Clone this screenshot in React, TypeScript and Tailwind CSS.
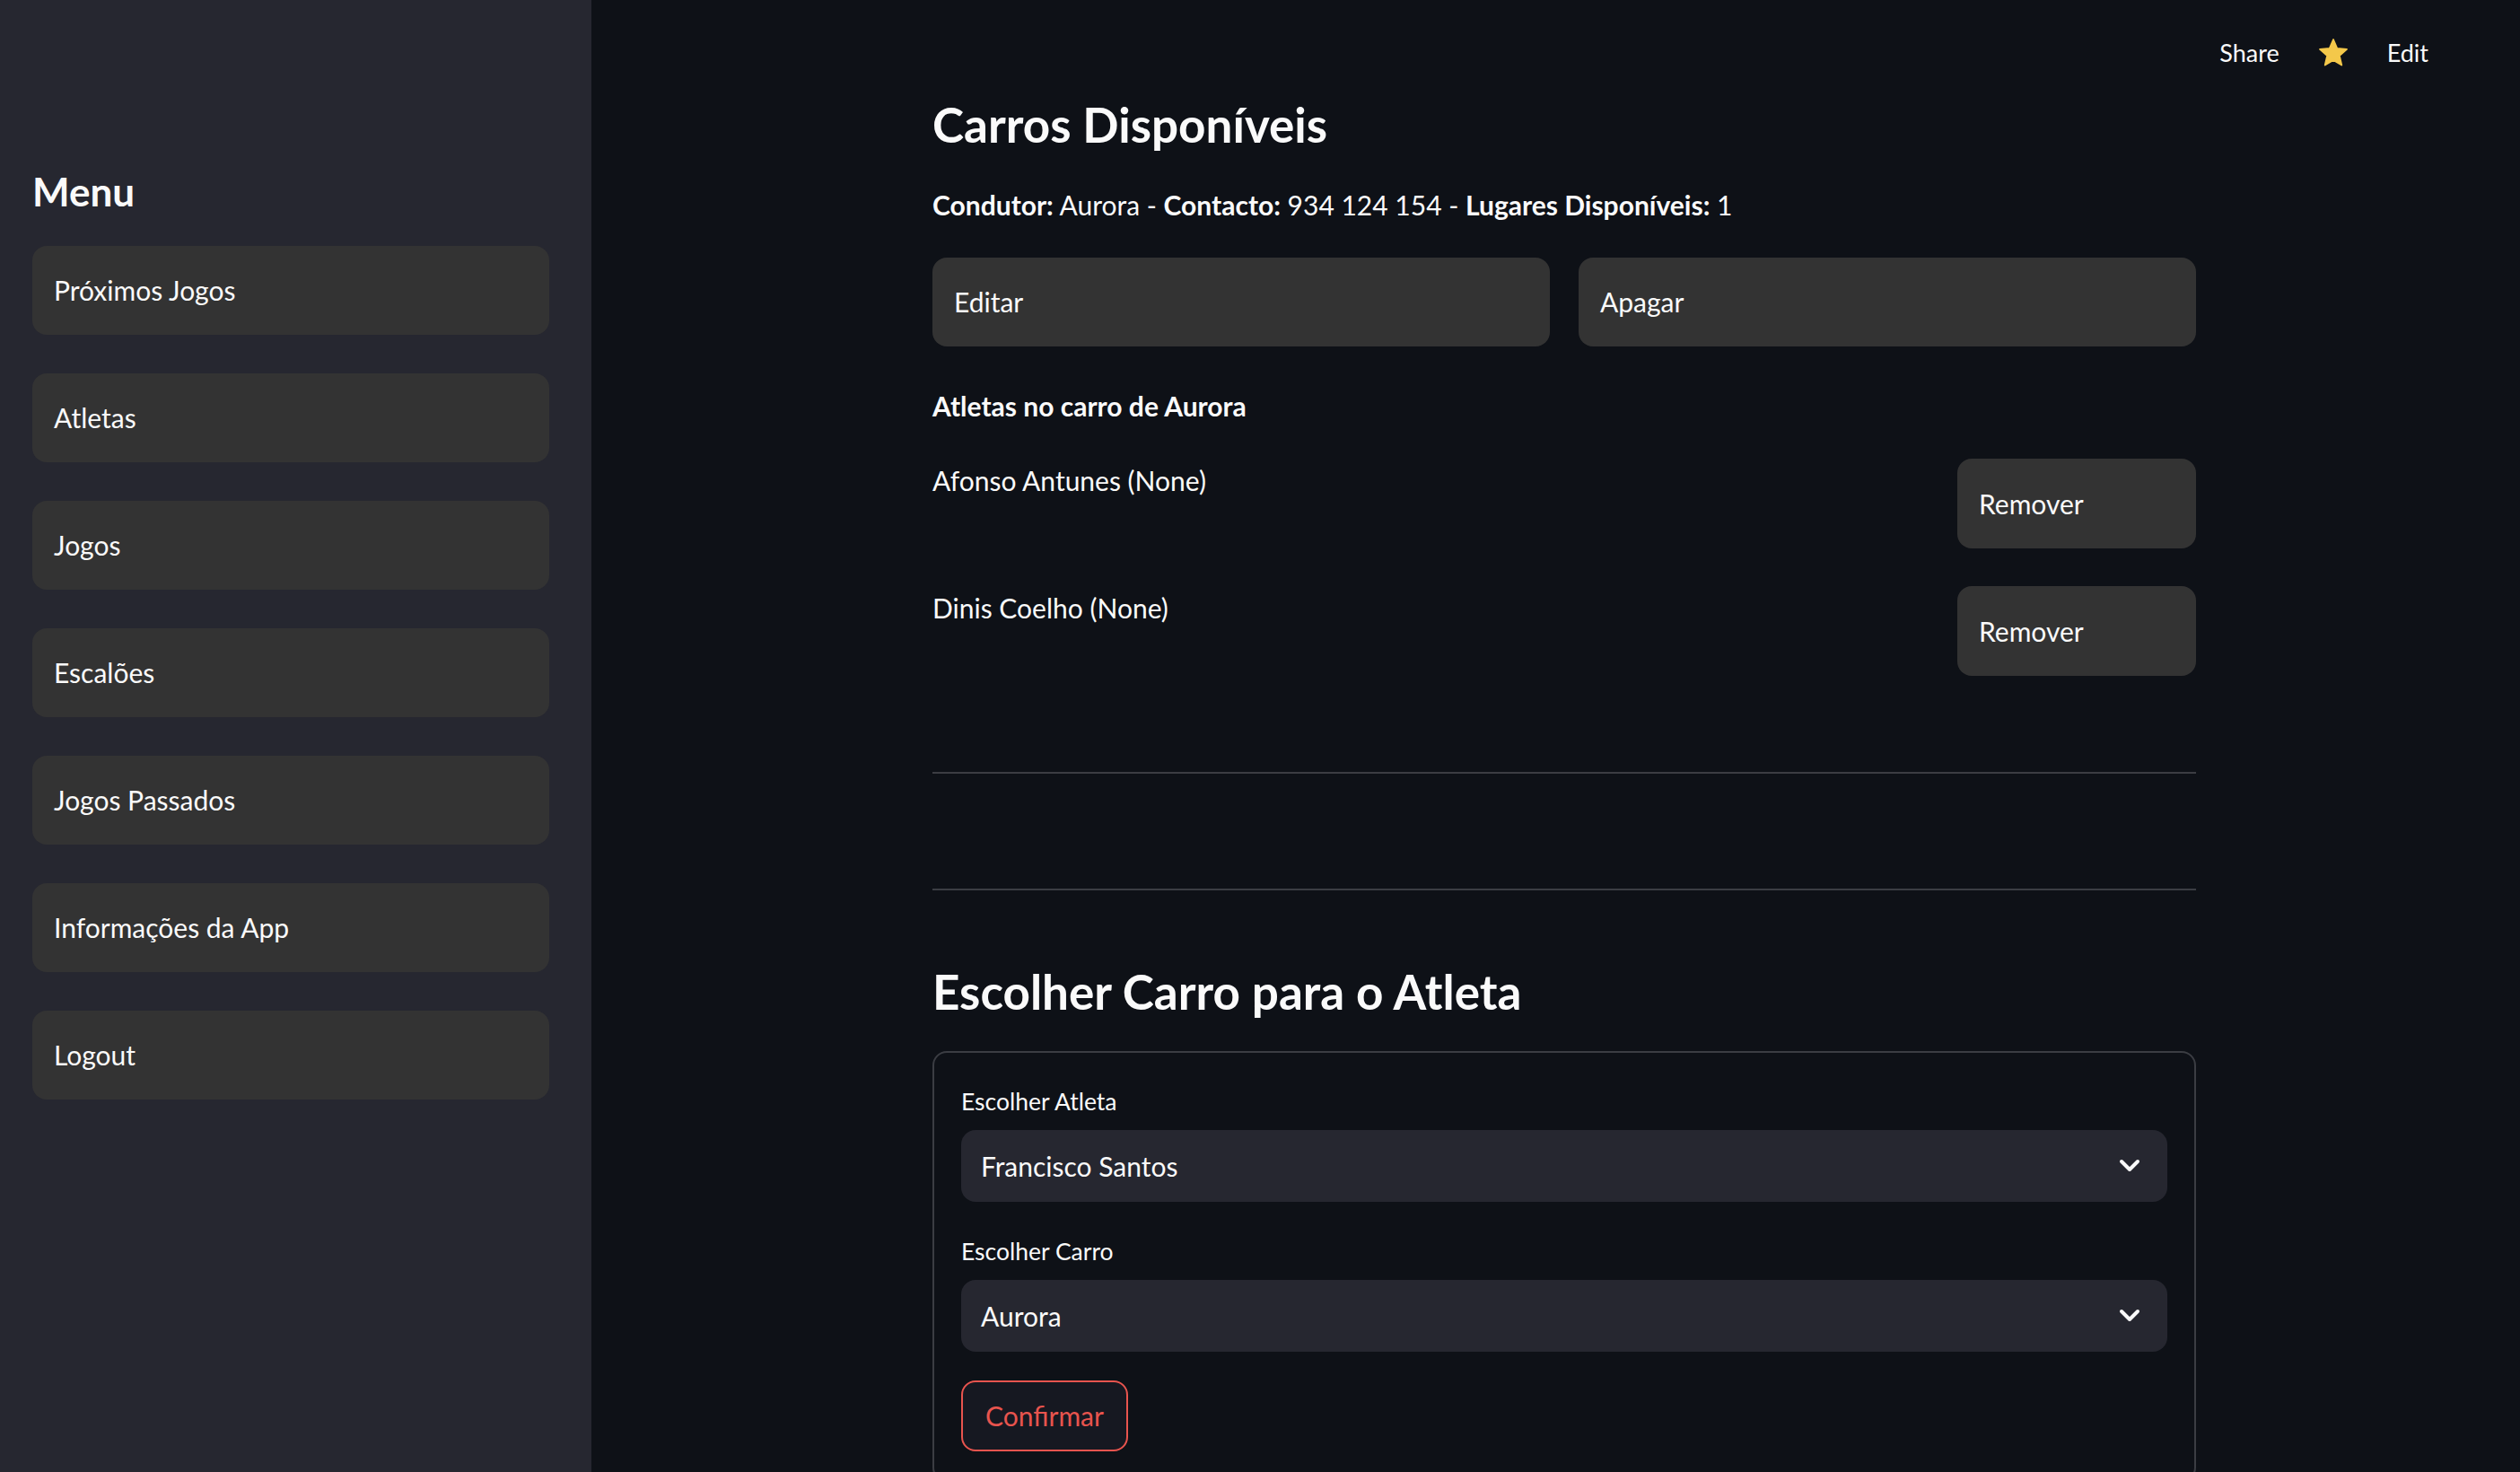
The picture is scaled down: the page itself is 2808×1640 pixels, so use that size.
import { ReactNode } from "react";

const font = { fontFamily: "Lato, 'Noto Sans', sans-serif" };

const menuItems = [
  "Próximos Jogos",
  "Atletas",
  "Jogos",
  "Escalões",
  "Jogos Passados",
  "Informações da App",
  "Logout",
];

function GrayButton({ children, className = "" }: { children: ReactNode; className?: string }) {
  return (
    <button
      className={`flex h-[99px] items-center rounded-[16px] bg-[#333333] px-[24px] text-left text-[30px] text-[#fafafa] ${className}`}
    >
      {children}
    </button>
  );
}

function Chevron() {
  return (
    <svg width="24" height="16" viewBox="0 0 24 16" fill="none">
      <path d="M3 3 L12 12 L21 3" stroke="#fafafa" strokeWidth="4" strokeLinecap="round" strokeLinejoin="round" />
    </svg>
  );
}

function Select({ label, value }: { label: string; value: string }) {
  return (
    <div className="flex flex-col">
      <div className="h-[40px] text-[26.5px] leading-[40px] text-[#fafafa]">{label}</div>
      <div className="mt-[12px] flex h-[80px] items-center justify-between rounded-[16px] bg-[#262730] pl-[22px] pr-[30px] text-[30px] text-[#fafafa]">
        <span>{value}</span>
        <Chevron />
      </div>
    </div>
  );
}

function Sidebar() {
  return (
    <aside className="flex w-[659px] shrink-0 flex-col bg-[#262730] pl-[36px] pr-[47px] pt-[173px]">
      <h2 className="h-[80px] text-[44px] font-bold leading-[80px] text-[#fafafa]">Menu</h2>
      <div className="mt-[21px] flex flex-col gap-[43px]">
        {menuItems.map((item) => (
          <GrayButton key={item} className="h-[98px] w-full">
            {item}
          </GrayButton>
        ))}
      </div>
    </aside>
  );
}

function Header() {
  return (
    <div className="flex h-[99px] items-center justify-end gap-[42px] pt-[19px] pr-[102px] text-[27px] text-[#fafafa]">
      <span>Share</span>
      <svg width="36" height="36" viewBox="0 0 24 24">
        <path
          d="M12 17.27L18.18 21l-1.64-7.03L22 9.24l-7.19-.61L12 2 9.19 8.63 2 9.24l5.46 4.73L5.82 21z"
          fill="#f4c84a"
          stroke="#f4c84a"
          strokeWidth="1.2"
          strokeLinejoin="round"
        />
      </svg>
      <span>Edit</span>
    </div>
  );
}

function Passenger({ name }: { name: string }) {
  return (
    <div className="flex items-start justify-between">
      <span className="text-[30px] leading-[48px] text-[#fafafa]">{name}</span>
      <GrayButton className="h-[100px] w-[266px]">Remover</GrayButton>
    </div>
  );
}

export default function App() {
  return (
    <div className="flex h-[1640px] w-[2808px] overflow-hidden bg-[#0e1117]" style={font}>
      <Sidebar />
      <main className="block flex-1">
        <Header />
        <div className="ml-[380px] flex w-[1408px] flex-col">
          <h3 className="h-[80px] text-[53px] font-bold leading-[80px] text-[#fafafa]">Carros Disponíveis</h3>
          <p className="mt-[25px] text-[30px] leading-[48px] text-[#fafafa]">
            <b>Condutor:</b> Aurora - <b>Contacto:</b> 934 124 154 - <b>Lugares Disponíveis:</b> 1
          </p>
          <div className="mt-[35px] grid grid-cols-2 gap-[32px]">
            <GrayButton>Editar</GrayButton>
            <GrayButton>Apagar</GrayButton>
          </div>
          <p className="mt-[42px] text-[30px] font-bold leading-[48px] text-[#fafafa]">Atletas no carro de Aurora</p>
          <div className="mt-[35px] flex flex-col gap-[42px]">
            <Passenger name="Afonso Antunes (None)" />
            <Passenger name="Dinis Coelho (None)" />
          </div>
          <hr className="mt-[107px] border-t-2 border-[#3b3d43]" />
          <hr className="mt-[128px] border-t-2 border-[#3b3d43]" />
          <h3 className="mt-[73px] h-[80px] text-[53px] font-bold leading-[80px] text-[#fafafa]">
            Escolher Carro para o Atleta
          </h3>
          <div className="mt-[26px] flex flex-col rounded-[16px] border-2 border-[#3b3d43] px-[30px] pb-[32px] pt-[34px]">
            <Select label="Escolher Atleta" value="Francisco Santos" />
            <div className="mt-[35px]">
              <Select label="Escolher Carro" value="Aurora" />
            </div>
            <div className="mt-[32px]">
              <button className="h-[79px] w-[186px] rounded-[16px] border-2 border-[#e8544e] bg-[#161821] text-[30px] text-[#e8544e]">
                Confirmar
              </button>
            </div>
          </div>
        </div>
      </main>
    </div>
  );
}
